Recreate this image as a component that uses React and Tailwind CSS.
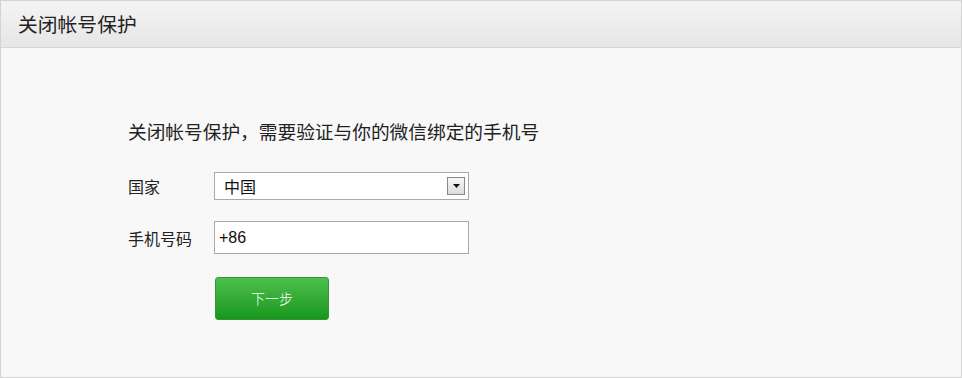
export default function App() {
    const font = { fontFamily: '"Noto Sans CJK SC", "Liberation Sans", sans-serif' };
    return (
        <div className="w-[962px] h-[378px] bg-white" style={font}>
            <div className="h-full w-full border border-[#d3d3d3] bg-[#f8f8f8] flex flex-col">
                <div className="h-[47px] shrink-0 bg-gradient-to-b from-[#f4f4f4] to-[#e6e6e6] border-b border-[#d6d6d6] flex items-center pl-[17px]">
                    <span className="text-[19.8px] text-[#222] leading-none">关闭帐号保护</span>
                </div>
                <div className="pl-[127px] pt-[72px]">
                    <p className="text-[18.7px] text-[#222] leading-[22px]">关闭帐号保护，需要验证与你的微信绑定的手机号</p>
                    <div className="mt-[30px] flex items-center h-[28px]">
                        <span className="w-[86px] text-[16px] text-[#222]">国家</span>
                        <div className="w-[255px] h-[28px] border border-[#a9a9a9] bg-white flex items-center justify-between pl-[9px] pr-[3px]">
                            <span className="text-[16px] text-[#111]">中国</span>
                            <div className="w-[18px] h-[18px] border border-[#8a8a8a] bg-gradient-to-b from-[#f6f6f6] to-[#dcdcdc] flex items-center justify-center">
                                <svg width="7" height="4" viewBox="0 0 7 4"><path d="M0 0h7L3.5 4z" fill="#111" /></svg>
                            </div>
                        </div>
                    </div>
                    <div className="mt-[21px] flex items-center h-[33px]">
                        <span className="w-[86px] text-[16px] text-[#222]">手机号码</span>
                        <div className="w-[255px] h-[33px] border border-[#a9a9a9] bg-white flex items-center pl-[4px]">
                            <span className="text-[16px] text-[#111]" style={{ fontFamily: '"Liberation Sans", sans-serif' }}>+86</span>
                        </div>
                    </div>
                    <div className="mt-[23px] ml-[87px]">
                        <button className="w-[114px] h-[43px] rounded-[3px] border border-[#3f8f3f] bg-gradient-to-b from-[#4cbf4c] to-[#14981a] text-white text-[14px] font-light">下一步</button>
                    </div>
                </div>
            </div>
        </div>
    )
}
